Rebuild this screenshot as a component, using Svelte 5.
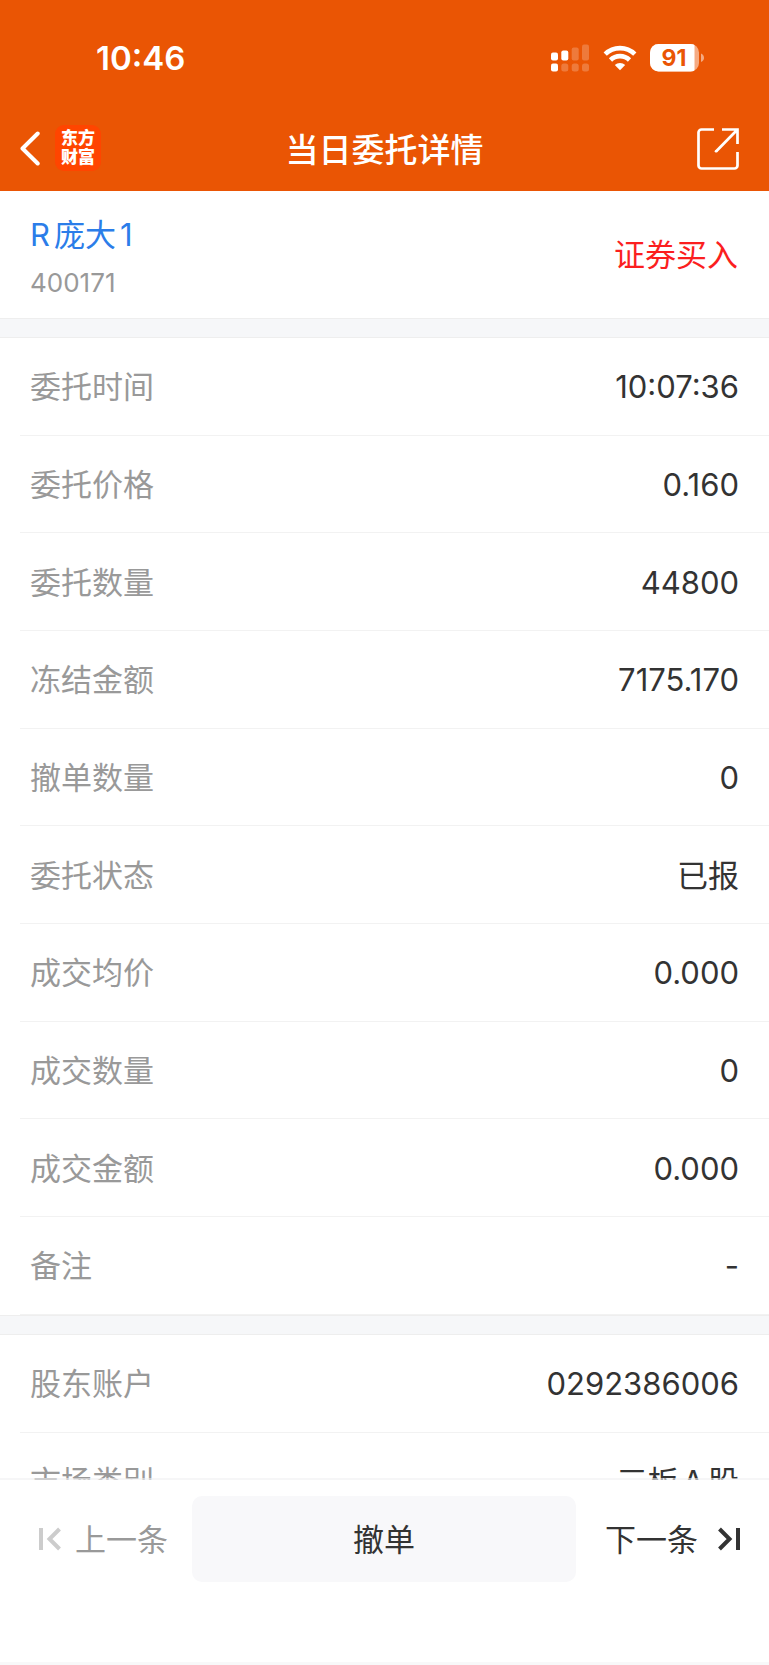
<script>
  const order = [
    ['委托时间', '10:07:36'],
    ['委托价格', '0.160'],
    ['委托数量', '44800'],
    ['冻结金额', '7175.170'],
    ['撤单数量', '0'],
    ['委托状态', '已报'],
    ['成交均价', '0.000'],
    ['成交数量', '0'],
    ['成交金额', '0.000'],
    ['备注', '-']
  ];
  const account = [
    ['股东账户', '0292386006'],
    ['市场类别', '三板A股']
  ];

  // Splits a string where Chinese and Latin text meet, so a small gap can sit between them.
  const runs = (text) => text.match(/[\u4e00-\u9fff]+|[^\u4e00-\u9fff]+/g) ?? [];
</script>

{#snippet mixed(text)}
  <span class="mixed">{#each runs(text) as run}<span>{run}</span>{/each}</span>
{/snippet}

<div class="page">
  <header>
    <div class="status">
      <time>10:46</time>
      <div class="indicators">
        <svg width="39" height="28" viewBox="0 0 39 28" fill="#fff" aria-hidden="true">
          <rect x="0" y="8.500" width="7" height="8" rx="2" />
          <rect x="10.300" y="6.500" width="7" height="10" rx="2" />
          <rect x="20.700" y="3.500" width="7" height="13" rx="2" opacity=".22" />
          <rect x="31" y="0.500" width="7" height="16" rx="2" opacity=".22" />
          <rect x="0" y="19.500" width="7" height="8" rx="2" />
          <rect x="10.300" y="19.500" width="7" height="8" rx="2.500" opacity=".22" />
          <rect x="20.700" y="19.500" width="7" height="8" rx="2.500" opacity=".22" />
          <rect x="31" y="19.500" width="7" height="8" rx="2.500" opacity=".22" />
        </svg>
        <svg width="34" height="26" viewBox="0 0 34 26" aria-hidden="true">
          <g fill="none" stroke="#fff" stroke-width="4.600">
            <path d="M2.200 9.200a21 21 0 0 1 29.600 0" />
            <path d="M7.500 15a13.500 13.500 0 0 1 19 0" />
          </g>
          <path fill="#fff" d="M17 25.200l-5.200-5.100a7.400 7.400 0 0 1 10.400 0z" />
        </svg>
        <div class="battery">
          <svg width="54" height="28" viewBox="0 0 54 28" aria-hidden="true">
            <defs>
              <clipPath id="charge"><rect width="44.500" height="28" /></clipPath>
            </defs>
            <rect width="49" height="27.500" rx="8.500" fill="#fff" opacity=".5" />
            <rect width="49" height="27.500" rx="8.500" fill="#fff" clip-path="url(#charge)" />
            <path d="M51 9.500c2 .8 3 2.300 3 4.300s-1 3.500-3 4.300z" fill="#fff" opacity=".5" />
          </svg>
          <span>91</span>
        </div>
      </div>
    </div>
    <nav>
      <div class="left">
        <button class="icon" aria-label="返回">
          <svg width="20" height="35" viewBox="0 0 20 35" fill="none" stroke="#fff" stroke-width="4" stroke-linecap="round" stroke-linejoin="round">
            <path d="M17.700 2.500 2.500 17.500l15.200 15" />
          </svg>
        </button>
        <div class="logo"><span>东方</span><span>财富</span></div>
      </div>
      <h1>当日委托详情</h1>
      <button class="icon share" aria-label="分享">
        <svg width="42" height="42" viewBox="0 0 42 42" fill="none" stroke="#fff" stroke-width="2.700">
          <path d="M17 1.500H4.500a3 3 0 0 0-3 3v33a3 3 0 0 0 3 3h33a3 3 0 0 0 3-3V24" />
          <path d="M25 1.500h15.500V16M40 2 19 23.500" />
          <circle cx="19" cy="23.300" r="1.300" fill="#fff" stroke="none" />
        </svg>
      </button>
    </nav>
  </header>

  <main>
    <section class="stock">
      <div>
        <a href="#stock">{@render mixed('R庞大1')}</a>
        <p>400171</p>
      </div>
      <strong>证券买入</strong>
    </section>
    <div class="gap"></div>
    <dl class="order">
      {#each order as [label, value]}
        <div class="row"><dt>{label}</dt><dd>{value}</dd></div>
      {/each}
    </dl>
    <div class="gap"></div>
    <dl>
      {#each account as [label, value]}
        <div class="row"><dt>{label}</dt><dd>{@render mixed(value)}</dd></div>
      {/each}
    </dl>
  </main>

  <footer>
    <div class="actions">
      <button class="step prev" disabled>
        <svg width="22" height="24" viewBox="0 0 22 24" fill="none" stroke="#ccc" stroke-width="4">
          <path d="M2 1v22M20.500 2 10.500 12l10 10" />
        </svg>
        <span>上一条</span>
      </button>
      <button class="cancel"><span>撤单</span></button>
      <button class="step next">
        <span>下一条</span>
        <svg width="22" height="24" viewBox="0 0 22 24" fill="none" stroke="#333" stroke-width="4">
          <path d="M20 1v22M1.500 2l10 10-10 10" />
        </svg>
      </button>
    </div>
  </footer>
</div>

<style>
  :global(body) {
    margin: 0;
    background: #fff;
  }
  .page {
    display: flex;
    flex-direction: column;
    height: 100vh;
    overflow: hidden;
    background: #fff;
    color: #333;
    font-family: Inter, 'Noto Sans CJK SC', sans-serif;
    font-size: 31px;
    line-height: 40px;
  }
  button {
    margin: 0;
    padding: 0;
    border: 0;
    background: none;
    color: inherit;
    font: inherit;
  }
  svg {
    display: block;
    flex: none;
  }
  .mixed {
    display: inline-flex;
    gap: 4px;
  }
  header {
    flex: none;
    padding-top: 38px;
    background: #ea5504;
    color: #fff;
  }
  .status {
    display: flex;
    align-items: center;
    justify-content: space-between;
    height: 40px;
    padding: 0 65px 0 96px;
  }
  time {
    font-size: 33px;
    font-weight: 600;
  }
  .indicators {
    display: flex;
    align-items: center;
    gap: 13px;
  }
  .battery {
    position: relative;
  }
  .battery span {
    position: absolute;
    inset: 0 6px 0 0;
    color: #ea5504;
    font-size: 23px;
    font-weight: 700;
    line-height: 28px;
    text-align: center;
  }
  nav {
    display: grid;
    grid-template-columns: 1fr auto 1fr;
    align-items: center;
    height: 86px;
    margin-top: 27px;
  }
  .left {
    display: flex;
    align-items: center;
    gap: 15px;
    padding-left: 20px;
  }
  .logo {
    display: flex;
    flex-direction: column;
    align-items: center;
    justify-content: center;
    width: 46px;
    height: 46px;
    border-radius: 9px;
    background: #ff4500;
    font-size: 17px;
    font-weight: 900;
    line-height: 19px;
  }
  h1 {
    margin: 0;
    padding-top: 3px;
    font-size: 33px;
    font-weight: 500;
  }
  .share {
    justify-self: end;
    padding: 2px 30px 0 0;
  }
  main {
    flex: 1;
    min-height: 0;
    margin-bottom: -2px;
    overflow: hidden;
  }
  .stock {
    display: flex;
    align-items: center;
    justify-content: space-between;
    padding: 24px 31px 15px 30px;
  }
  .stock a {
    display: block;
    color: #2b7de9;
    text-decoration: none;
  }
  .stock p {
    margin: 8px 0 0;
    color: #999;
    font-size: 26px;
  }
  .stock strong {
    padding-bottom: 9px;
    color: #fb1f1f;
    font-weight: 400;
  }
  .gap {
    height: 18px;
    border: solid #eee;
    border-width: 1px 0;
    background: #f6f7f9;
  }
  dl {
    display: grid;
    grid-auto-rows: minmax(98px, auto);
    margin: 0;
  }
  .order {
    grid-auto-rows: 1fr;
    min-height: 127vw;
  }
  .row {
    display: flex;
    align-items: center;
    justify-content: space-between;
    margin-left: 20px;
    padding: 2px 30px 0 10px;
    border-bottom: 1px solid #f2f2f2;
  }
  dt {
    color: #999;
  }
  dd {
    margin: 0;
  }
  footer {
    position: relative;
    flex: none;
    padding: 16px 0 80px;
    border-top: 2px solid rgba(240, 240, 242, 0.6);
    border-bottom: 3px solid #f8f8f9;
    background: #fff;
    background-clip: padding-box;
  }
  .actions {
    display: grid;
    grid-template-columns: 192px 1fr 193px;
    height: 86px;
  }
  .actions span {
    padding-top: 2px;
  }
  .step,
  .cancel {
    display: flex;
    align-items: center;
  }
  .prev {
    gap: 14px;
    padding-left: 39px;
    color: #999;
  }
  .next {
    justify-content: flex-end;
    gap: 20px;
    padding-right: 29px;
  }
  .cancel {
    justify-content: center;
    border-radius: 10px;
    background: #f8f8fa;
  }
</style>
